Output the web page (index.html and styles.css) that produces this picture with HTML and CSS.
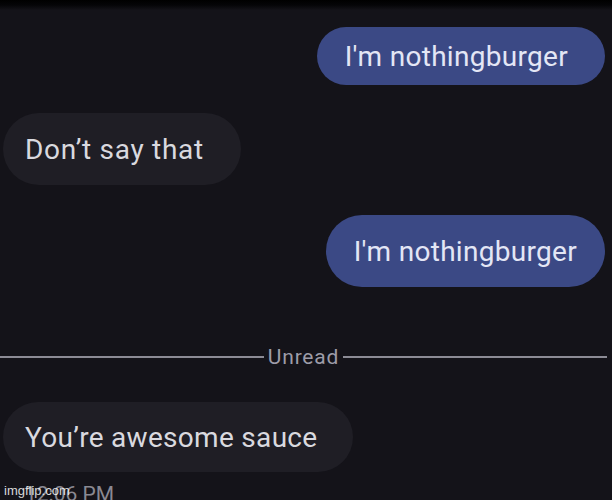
FILE: index.html
```html
<!DOCTYPE html>
<html>
<head>
<meta charset="utf-8">
<link rel="stylesheet" href="styles.css">
</head>
<body>
<div class="screen">
  <div class="chat">
    <div class="bubble out first">I'm nothingburger</div>
    <div class="bubble in second">Don’t say that</div>
    <div class="bubble out third">I'm nothingburger</div>
    <div class="divider"><span class="line"></span><span class="label">Unread</span><span class="line"></span></div>
    <div class="bubble in fourth">You’re awesome sauce</div>
    <div class="time">12:06 PM</div>
  </div>
  <div class="watermark">imgflip.com</div>
</div>
</body>
</html>
```

FILE: styles.css
```css
html, body {
  margin: 0;
  padding: 0;
}
body {
  width: 612px;
  height: 500px;
  overflow: hidden;
  background: #141319;
  font-family: Roboto, "Noto Sans", sans-serif;
}
.screen {
  position: relative;
  width: 612px;
  height: 500px;
  background: linear-gradient(to bottom, #000 0px, #050507 5px, #141319 10px, #141319 100%);
  overflow: hidden;
}
.chat {
  display: flex;
  flex-direction: column;
  padding-top: 27px;
}
.bubble {
  display: flex;
  align-items: center;
  box-sizing: border-box;
  font-size: 28px;
  letter-spacing: 0.3px;
  border-radius: 36px;
  white-space: nowrap;
}
.out {
  align-self: flex-end;
  margin-right: 7px;
  background: #3b4985;
  color: #e3e6f5;
}
.in {
  align-self: flex-start;
  margin-left: 3px;
  background: #1f1e25;
  color: #d9d9df;
}
.first {
  height: 58px;
  padding: 0 37px 0 28px;
  border-radius: 30px;
}
.second {
  height: 72px;
  margin-top: 28px;
  padding: 0 37px 0 22px;
  letter-spacing: 0.7px;
}
.third {
  height: 72px;
  margin-top: 30px;
  padding: 0 28px 0 28px;
}
.divider {
  display: flex;
  align-items: center;
  gap: 4px;
  margin-top: 58px;
  height: 24px;
}
.line {
  flex: 1;
  height: 2px;
  background: #8c8b95;
}
.divider .line:last-child {
  margin-right: 5px;
}
.label {
  color: #9d9ca8;
  font-size: 21px;
  letter-spacing: 0.8px;
}
.fourth {
  height: 70px;
  margin-top: 33px;
  padding: 0 36px 0 22px;
}
.time {
  margin-top: 10px;
  margin-left: 25px;
  color: #8a8992;
  font-size: 21px;
}
.watermark {
  position: absolute;
  left: 4px;
  bottom: 2px;
  color: rgba(255, 255, 255, 0.85);
  font-family: "Liberation Sans", Arial, sans-serif;
  font-size: 13px;
}
```
